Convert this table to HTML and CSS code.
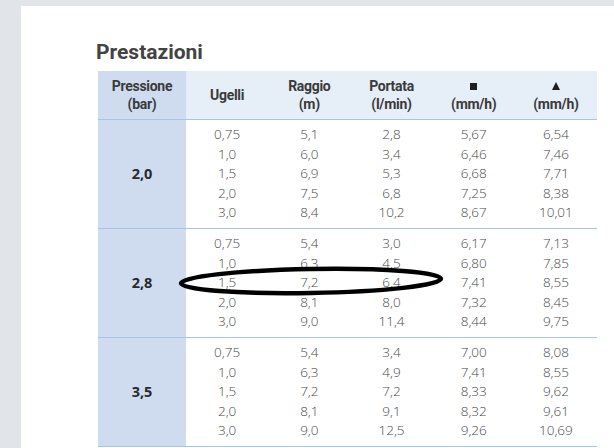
FILE: index.html
```html
<!DOCTYPE html>
<html lang="it">
<head>
<meta charset="utf-8">
<title>Prestazioni</title>
<link rel="stylesheet" href="styles.css">
</head>
<body>
<div class="page">
  <h1 class="title">Prestazioni</h1>
  <div class="table">
    <div class="head">
      <div class="hcell first">Pressione<br>(bar)</div>
      <div class="hcell">Ugelli</div>
      <div class="hcell">Raggio<br>(m)</div>
      <div class="hcell">Portata<br>(l/min)</div>
      <div class="hcell"><span class="sq"></span>(mm/h)</div>
      <div class="hcell"><span class="tri"></span>(mm/h)</div>
    </div>
    <div class="group">
      <div class="label">2,0</div>
      <div class="col"><span>0,75</span><span>1,0</span><span>1,5</span><span>2,0</span><span>3,0</span></div>
      <div class="col"><span>5,1</span><span>6,0</span><span>6,9</span><span>7,5</span><span>8,4</span></div>
      <div class="col"><span>2,8</span><span>3,4</span><span>5,3</span><span>6,8</span><span>10,2</span></div>
      <div class="col"><span>5,67</span><span>6,46</span><span>6,68</span><span>7,25</span><span>8,67</span></div>
      <div class="col"><span>6,54</span><span>7,46</span><span>7,71</span><span>8,38</span><span>10,01</span></div>
    </div>
    <div class="group">
      <div class="label">2,8</div>
      <div class="col"><span>0,75</span><span>1,0</span><span>1,5</span><span>2,0</span><span>3,0</span></div>
      <div class="col"><span>5,4</span><span>6,3</span><span>7,2</span><span>8,1</span><span>9,0</span></div>
      <div class="col"><span>3,0</span><span>4,5</span><span>6,4</span><span>8,0</span><span>11,4</span></div>
      <div class="col"><span>6,17</span><span>6,80</span><span>7,41</span><span>7,32</span><span>8,44</span></div>
      <div class="col"><span>7,13</span><span>7,85</span><span>8,55</span><span>8,45</span><span>9,75</span></div>
    </div>
    <div class="group">
      <div class="label">3,5</div>
      <div class="col"><span>0,75</span><span>1,0</span><span>1,5</span><span>2,0</span><span>3,0</span></div>
      <div class="col"><span>5,4</span><span>6,3</span><span>7,2</span><span>8,1</span><span>9,0</span></div>
      <div class="col"><span>3,4</span><span>4,9</span><span>7,2</span><span>9,1</span><span>12,5</span></div>
      <div class="col"><span>7,00</span><span>7,41</span><span>8,33</span><span>8,32</span><span>9,26</span></div>
      <div class="col"><span>8,08</span><span>8,55</span><span>9,62</span><span>9,61</span><span>10,69</span></div>
    </div>
  </div>
</div>
<svg class="mark" width="270" height="36" viewBox="0 0 270 36">
  <ellipse cx="135" cy="18" rx="130" ry="12" fill="none" stroke="#000" stroke-width="4.5" transform="rotate(-1 135 18)"/>
</svg>
</body>
</html>
```
FILE: styles.css
```css
html, body {
  margin: 0;
  padding: 0;
}
body {
  background: #e1e5e9;
  font-family: "Open Sans", "Lato", sans-serif;
  position: relative;
  height: 448px;
  overflow: hidden;
}
.page {
  margin: 6px 0 0 21px;
  background: #fff;
  height: 442px;
  padding: 34px 0 0 76px;
  box-sizing: border-box;
}
.title {
  margin: 0 0 6px -1px;
  font-family: "Roboto", "Open Sans", sans-serif;
  font-size: 21px;
  line-height: 25px;
  font-weight: 700;
  color: #434343;
}
.table {
  width: 499px;
  margin-left: 1px;
}
.head {
  display: grid;
  grid-template-columns: 88px repeat(5, 1fr);
  height: 48px;
  background: #e6eef8;
  border-bottom: 1px solid #a9c3e7;
}
.hcell {
  display: flex;
  flex-direction: column;
  align-items: center;
  justify-content: center;
  text-align: center;
  font-family: "Roboto", "Open Sans", sans-serif;
  font-size: 14px;
  letter-spacing: -0.3px;
  line-height: 18px;
  font-weight: 700;
  color: #3a3a3a;
}
.hcell.first {
  background: #cfdcf0;
}
.sq {
  display: block;
  width: 7px;
  height: 7px;
  background: #1e1e1e;
  margin: 6px 0 5px;
}
.tri {
  display: block;
  width: 0;
  height: 0;
  border-left: 4.5px solid transparent;
  border-right: 4.5px solid transparent;
  border-bottom: 8px solid #1e1e1e;
  margin: 5px 0 5px;
}
.group {
  display: grid;
  grid-template-columns: 88px repeat(5, 1fr);
  border-bottom: 1px solid #a9c3e7;
}
.label {
  background: #cfdcf0;
  display: flex;
  align-items: center;
  justify-content: center;
  font-size: 14.5px;
  font-weight: 700;
  color: #2a2a2a;
}
.col {
  display: flex;
  flex-direction: column;
  align-items: center;
  padding: 5px 0;
}
.col span {
  display: block;
  height: 19.6px;
  line-height: 19.6px;
  font-size: 13.5px;
  font-weight: 300;
  color: #4a4a4a;
}
.mark {
  position: absolute;
  left: 176px;
  top: 263px;
}
```
